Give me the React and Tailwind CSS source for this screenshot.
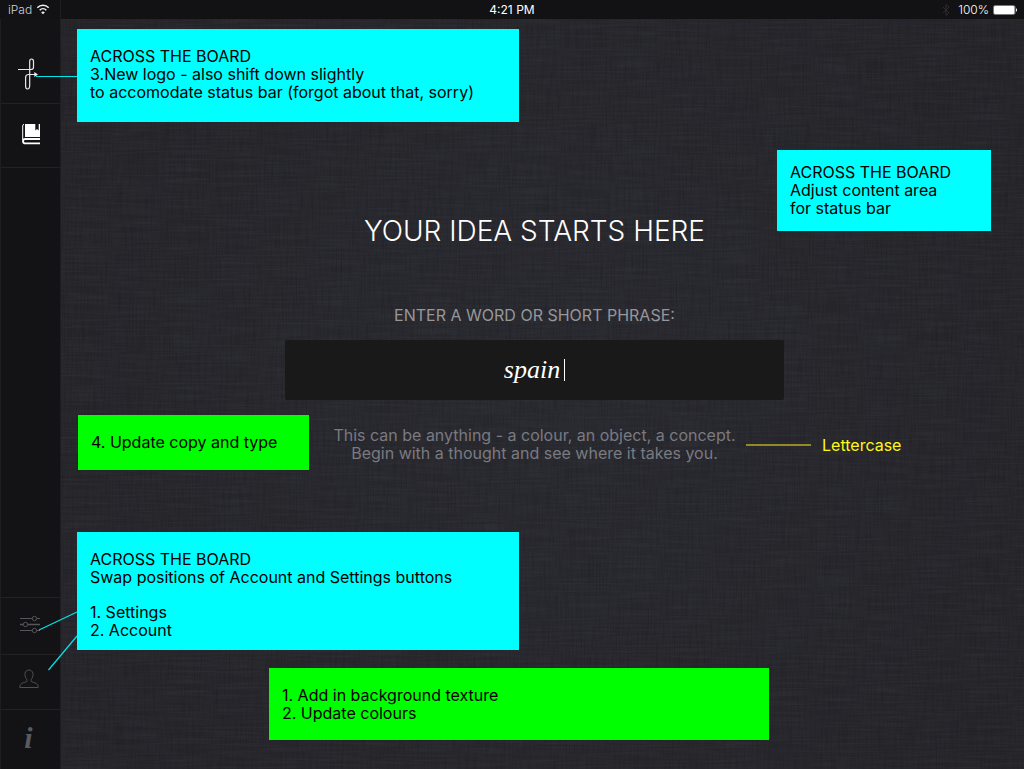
import React from 'react';

function StatusBar() {
  return (
    <header className="grid h-[19px] shrink-0 grid-cols-3 items-center bg-[#121214] text-xs text-white">
      <div className="flex h-full items-center">
        <div className="flex h-full w-[61px] items-center gap-1 border-r border-[#1e1e21] pl-2 text-[#d0d0d2]">
          <span className="font-light">iPad</span>
          <svg className="size-3.5" viewBox="0 0 14 14" fill="none" stroke="#f2f2f2" strokeWidth="1.5" aria-hidden="true">
            <path d="M1.3 4.700a8 8 0 0 1 11.4 0M3.7 7.200a4.7 4.7 0 0 1 6.6 0" />
            <path d="M7 11.300 5.2 9.400a2.6 2.6 0 0 1 3.6 0Z" fill="#f2f2f2" stroke="none" />
          </svg>
        </div>
      </div>
      <span className="text-center">4:21 PM</span>
      <div className="flex items-center justify-end gap-1 pr-[7px]">
        <svg className="h-3 w-2" viewBox="0 0 8 12" fill="none" stroke="#2c2c2f" aria-hidden="true">
          <path d="m1 3 6 6-3 2.500V.5L7 3 1 9" />
        </svg>
        <span className="pl-1 font-light">100%</span>
        <svg className="h-2.5 w-6" viewBox="0 0 24 10" aria-hidden="true">
          <rect x=".5" y=".5" width="21.500" height="9" rx="1.500" fill="#121214" stroke="#77777a" />
          <rect x="1" y="1" width="20.500" height="8" rx="1" fill="#fff" />
          <path d="M23 3.200c1.300.6 1.300 3 0 3.600Z" fill="#fff" />
        </svg>
      </div>
    </header>
  );
}

function SideButton({ label, className, children }) {
  return (
    <button type="button" aria-label={label} className={'flex w-full items-center justify-center border-[#222225] ' + className}>
      {children}
    </button>
  );
}

function Sidebar() {
  return (
    <nav className="flex w-[61px] shrink-0 flex-col border-x border-[#1e1e21] bg-[#131315]" aria-label="Main">
      <SideButton label="Home" className="h-[85px] border-b pt-[26px] pr-1">
        <svg className="h-[34px] w-[22px]" viewBox="0 0 22 34" fill="none" stroke="#e8e8e8" strokeWidth="1.200" aria-hidden="true">
          <path d="M0 12.500h12.800Q15.500 12.500 15.500 10.300V4.400Q15.500 2 13.500 2 11.700 2 11.700 4.200V28Q11.700 32 9.500 32 7.600 32 7.600 29V20.500Q7.600 17.500 10.500 17.500H17" />
          <path d="m16.300 15 3.700 2.500-3.700 2.500Z" fill="#f0f0f0" stroke="none" />
        </svg>
      </SideButton>
      <SideButton label="Library" className="h-16 border-b pb-1">
        <svg className="h-[22px] w-5" viewBox="0 0 20 22" fill="none" aria-hidden="true">
          <path d="M4 1h10.300v6.500L16 6l1.700 1.500V1H19v13H4Z" fill="#fff" />
          <path d="M3 1.300Q1.700 1.500 1.700 3v14" stroke="#fff" strokeWidth="1" />
          <path d="M19 16H4.500Q2 16 2 18.200 2 20.400 4.500 20.400h14.500" stroke="#fff" strokeWidth="1.800" />
        </svg>
      </SideButton>
      <div className="min-h-8 flex-1" />
      <SideButton label="Settings" className="h-[57px] border-t pr-px pb-1">
        <svg className="h-[19px] w-5" viewBox="0 0 20 19" stroke="#55555a" fill="#131315" aria-hidden="true">
          <path d="M0 3.500h20M0 15.500h20" />
          <path d="M0 9.500h20" strokeWidth="1.500" />
          <circle cx="14.500" cy="3.500" r="2.200" />
          <circle cx="5.500" cy="9.500" r="2.200" />
          <circle cx="14.500" cy="15.500" r="2.200" />
        </svg>
      </SideButton>
      <SideButton label="Account" className="h-[55px] border-t pr-1 pb-1.5">
        <svg className="h-5 w-5" viewBox="0 0 20 20" fill="none" stroke="#505055" aria-hidden="true">
          <path d="M.8 18.500h18.400c0-3.800-1.700-4.200-6.200-5.600-1.500-.6-1-2.300-.2-3.400 1-1.500 1.500-3.500 1.100-5.300C13.500 2.200 12 1 10 1S6.500 2.200 6.100 4.200C5.700 6 6.200 8 7.200 9.500c.8 1.100 1.300 2.800-.2 3.400C2.500 14.300.8 14.700.8 18.500Z" />
        </svg>
      </SideButton>
      <SideButton label="Information" className="h-[60px] border-t pr-1 pb-1">
        <span className="font-['Liberation_Serif',serif] text-3xl font-bold text-[#5a5a60] italic">i</span>
      </SideButton>
    </nav>
  );
}

function Texture() {
  return (
    <svg className="absolute inset-0 size-full" aria-hidden="true">
      <filter id="weft" x="0" y="0" width="100%" height="100%" colorInterpolationFilters="sRGB">
        <feTurbulence type="fractalNoise" baseFrequency="0.02 0.5" numOctaves="3" seed="4" />
        <feColorMatrix values="0 0 0 0 .3  0 0 0 0 .32  0 0 0 0 .35  .35 0 0 0 -.13" />
      </filter>
      <filter id="warp" x="0" y="0" width="100%" height="100%" colorInterpolationFilters="sRGB">
        <feTurbulence type="fractalNoise" baseFrequency="0.6 0.03" numOctaves="3" seed="9" />
        <feColorMatrix values="0 0 0 0 .05  0 0 0 0 .05  0 0 0 0 .07  .4 0 0 0 -.16" />
      </filter>
      <rect width="100%" height="100%" filter="url(#weft)" />
      <rect width="100%" height="100%" filter="url(#warp)" />
    </svg>
  );
}

function IdeaForm() {
  return (
    <form className="relative flex w-full flex-col items-center pr-4 text-center" onSubmit={(e) => e.preventDefault()}>
      <h1 className="text-[28px] leading-8 font-light text-white">YOUR IDEA STARTS HERE</h1>
      <label htmlFor="idea" className="mt-[59px] text-base leading-[18px] text-[#97979a]">
        ENTER A WORD OR SHORT PHRASE:
      </label>
      <div className="mt-4 flex h-[60px] w-[499px] max-w-full items-center justify-center gap-1 rounded-xs bg-[#19191a]">
        <input
          id="idea"
          type="text"
          defaultValue="spain"
          className="[field-sizing:content] bg-transparent font-['Liberation_Serif',serif] text-[26px] leading-8 text-white italic outline-none"
        />
        <span className="h-[22px] w-px bg-white" />
      </div>
      <p className="mt-[26px] text-base leading-[18px] text-[#7a7a80]">
        This can be anything - a colour, an object, a concept.
        <br />
        Begin with a thought and see where it takes you.
      </p>
    </form>
  );
}

function Note({ className, children }) {
  return <aside className={'absolute px-[13px] text-base leading-[18px] text-black ' + className}>{children}</aside>;
}

function Annotations() {
  return (
    <>
      <Note className="top-[29px] left-[77px] h-[93px] w-[442px] bg-[#00ffff] pt-[18px]">
        <p>ACROSS THE BOARD</p>
        <p>3.New logo - also shift down slightly</p>
        <p>to accomodate status bar (forgot about that, sorry)</p>
      </Note>
      <Note className="top-[150px] left-[777px] h-[81px] w-[214px] bg-[#00ffff] pt-[13px]">
        <p>ACROSS THE BOARD</p>
        <p>Adjust content area</p>
        <p>for status bar</p>
      </Note>
      <Note className="top-[415px] left-[78px] h-[55px] w-[231px] bg-[#00ff00] pt-[18px]">
        <p>4. Update copy and type</p>
      </Note>
      <Note className="top-[532px] left-[77px] h-[118px] w-[442px] bg-[#00ffff] pt-[18px]">
        <p>ACROSS THE BOARD</p>
        <p>Swap positions of Account and Settings buttons</p>
        <ol className="mt-[17px]">
          <li>1. Settings</li>
          <li>2. Account</li>
        </ol>
      </Note>
      <Note className="top-[668px] left-[269px] h-[72px] w-[500px] bg-[#00ff00] pt-[18px]">
        <ol>
          <li>1. Add in background texture</li>
          <li>2. Update colours</li>
        </ol>
      </Note>
      <p className="absolute top-[436px] left-[822px] text-base leading-[18px] text-[#fff71c]">Lettercase</p>
      <svg className="pointer-events-none absolute top-0 left-0 h-[769px] w-[1024px]" fill="none" stroke="#00e5e8" strokeWidth="1.200" aria-hidden="true">
        <path d="M36 76.500h41M39 630l38-18M48.500 670 77 636" />
        <path d="M746 445h65" stroke="#948a25" strokeWidth="2" />
      </svg>
    </>
  );
}

export default function App() {
  return (
    <div className="relative flex min-h-screen flex-col overflow-hidden bg-[#26262c] font-['Inter',sans-serif]">
      <StatusBar />
      <div className="flex flex-1">
        <Sidebar />
        <main className="relative flex flex-1 justify-center bg-[radial-gradient(circle,#292a30,#252429)] pt-[196px]">
          <Texture />
          <IdeaForm />
        </main>
      </div>
      <Annotations />
    </div>
  );
}
